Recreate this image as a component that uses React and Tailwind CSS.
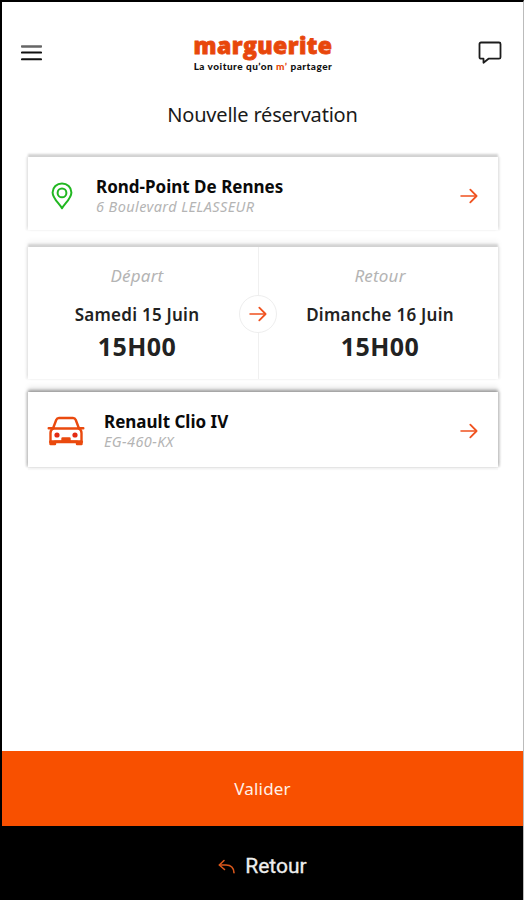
import React from 'react';

const STOPS = [
  { id: 'depart', label: 'Départ', day: 'Samedi 15 Juin', hour: '15H00', style: 'w-[230px] pr-[12px]' },
  { id: 'retour', label: 'Retour', day: 'Dimanche 16 Juin', hour: '15H00', style: 'flex-1 border-l border-[#f0f0f0] pl-[3px]' },
];

const MenuIcon = () => (
  <svg width="21" height="18" viewBox="0 0 21 18" fill="none" strokeWidth="2.1" strokeLinecap="round">
    <path d="M1 2.4h19" stroke="#666" strokeWidth="2.5" />
    <path d="M1 8.500h19M1 15.300h19" stroke="#111" />
  </svg>
);

const ChatIcon = () => (
  <svg width="26" height="26" viewBox="0 0 26 26" fill="none" stroke="#1c1c1c" strokeWidth="1.8" strokeLinejoin="round">
    <path d="M4 2.500h18a1.500 1.500 0 0 1 1.500 1.500v13.200a1.500 1.500 0 0 1-1.500 1.500H11.500l-5 4v-4H4a1.500 1.500 0 0 1-1.500-1.500V4A1.500 1.500 0 0 1 4 2.500z" />
  </svg>
);

const PinIcon = () => (
  <svg width="22" height="28" viewBox="0 0 22 28" fill="none" stroke="#21b721" strokeWidth="2" strokeLinejoin="round">
    <path d="M11 26.300C8.500 21.500 1.600 16.500 1.600 10.400a9.400 9 0 0 1 18.800 0C20.400 16.500 13.500 21.500 11 26.300z" />
    <circle cx="11" cy="10.900" r="4.400" />
  </svg>
);

const CarIcon = () => (
  <svg width="38" height="30" viewBox="0 0 38 30" fill="none" stroke="#ea4a0e" strokeWidth="2.400" strokeLinejoin="round" strokeLinecap="round">
    <path d="M6 12.500 9.200 4Q10 2 12 2h14Q28 2 28.800 4L32 12.500z" />
    <path d="M1.700 12.200H6M32 12.200h4.300" />
    <path d="M6 12.500Q3.500 14 3.500 17v11h4.500v-2.300h22V28h4.500V17q0-3-2.500-4.500" />
    <path d="M3.500 25.700h31" strokeWidth="3" />
    <circle cx="10" cy="19" r="2.600" fill="#e32a12" stroke="none" />
    <circle cx="28" cy="19" r="2.600" fill="#e32a12" stroke="none" />
    <path d="M15.500 25v-2.500h7V25z" fill="#d9430d" />
  </svg>
);

const Arrow = () => (
  <svg width="18" height="16" viewBox="0 0 18 16" fill="none" stroke="#f0521f" strokeLinecap="round" strokeLinejoin="round">
    <path d="M1 8h15" strokeWidth="1.500" />
    <path d="M10.300 1.600 16.600 8l-6.300 6.400" strokeWidth="1.800" />
  </svg>
);

const BackIcon = () => (
  <svg width="18" height="16" viewBox="0 0 18 16" fill="none" stroke="#d9571b" strokeWidth="1.600" strokeLinecap="round" strokeLinejoin="round">
    <path d="M6 1.500 1.300 6 6.500 10.500" />
    <path d="M1.600 6H8q7.600 0 8 7.800" />
  </svg>
);

const Header = () => (
  <header className="flex justify-between pl-[19px] pr-5 pt-7 h-[97px]">
    <div className="w-[130px] pt-[14px]">
      <MenuIcon />
    </div>
    <div className="flex flex-col items-center whitespace-nowrap pt-px pl-[2px]">
      <div className="font-['Open_Sans'] font-extrabold text-[23px] leading-[28px] tracking-[0.4px] text-[#e8470b] [-webkit-text-stroke:0.8px_#e8470b]">
        marguerite
      </div>
      <div className="font-['Lato'] font-black text-[10px] leading-[14px] tracking-[0.5px] text-[#111]">
        La voiture qu’on <span className="text-[#e8470b]">m’</span> partager
      </div>
    </div>
    <div className="w-[130px] pt-[10px] flex justify-end">
      <ChatIcon />
    </div>
  </header>
);

const InfoCard = ({ icon, title, detail, className }) => (
  <div className={`flex items-center bg-white ${className}`}>
    {icon}
    <div className="flex-1">
      <div className="font-bold text-[17px] leading-[20px] text-[#0a0a0a]">{title}</div>
      <div className="italic text-[14.5px] leading-[19px] tracking-[0.4px] text-[#b4b4b4]">{detail}</div>
    </div>
    <Arrow />
  </div>
);

const App = () => {
  return (
    <div className="w-[524px] h-[900px] flex flex-col bg-white border-t-2 border-l-2 border-r border-t-black border-l-black border-r-[#bbb] font-['Noto_Sans',sans-serif] overflow-hidden">
      <Header />
      <h1 className="text-center text-[20px] leading-[32px] tracking-[-0.2px] text-[#1a1a1a]">Nouvelle réservation</h1>

      <main className="flex-1 flex flex-col pt-[26px] pl-[26px] pr-[25px]">
        <InfoCard
          icon={<span className="w-[68px] pl-[23px]"><PinIcon /></span>}
          title="Rond-Point De Rennes"
          detail="6 Boulevard LELASSEUR"
          className="h-[73px] pt-[5px] pr-[20px] shadow-[0_-3px_2px_#d2d2d2,2px_0_2px_#eeeeee,-2px_0_2px_#eeeeee]"
        />

        <div className="relative flex mt-[17px] h-[132px] bg-white text-center shadow-[0_-3px_2px_#d2d2d2,0_-6px_6px_#f4f4f4,2px_0_2px_#eeeeee,-2px_0_2px_#eeeeee]">
          {STOPS.map((stop) => (
            <div key={stop.id} className={`pt-[18px] ${stop.style}`}>
              <div className="italic text-[17px] leading-[22px] tracking-[0.2px] text-[#b4b4b4]">{stop.label}</div>
              <div className="mt-[16px] font-semibold text-[17px] leading-[24px] tracking-[0.25px] text-[#222]">{stop.day}</div>
              <div className="mt-[3px] font-bold text-[25px] leading-[32px] tracking-[0.4px] text-[#222]">{stop.hour}</div>
            </div>
          ))}
          <div className="absolute left-[211px] top-[48px] w-[38px] h-[38px] rounded-full bg-white border border-[#eeeeee] flex items-center justify-center">
            <Arrow />
          </div>
        </div>

        <InfoCard
          icon={<span className="w-[76px] pl-[19px]"><CarIcon /></span>}
          title="Renault Clio IV"
          detail="EG-460-KX"
          className="mt-[13px] h-[75px] pt-[3px] pr-[20px] shadow-[0_-2px_3px_#999999,0_-6px_5px_#f0f0f0,2px_0_2px_#dddddd,-2px_0_2px_#dddddd,0_3px_1px_#f8f8f8]"
        />
      </main>

      <button className="h-[75px] bg-[#f85000] text-[#fff0e8] text-[17px] tracking-[0.2px]">Valider</button>
      <button className="h-[74px] bg-black text-[#eee] font-['Roboto'] text-[21px] flex items-center justify-center gap-[9px] pt-[7px] [-webkit-text-stroke:0.3px_#eee]">
        <BackIcon />
        Retour
      </button>
    </div>
  );
};

export default App;
